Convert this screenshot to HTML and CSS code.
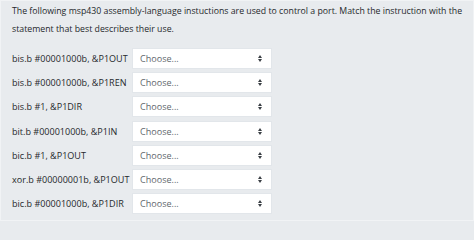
FILE: index.html
```html
<!DOCTYPE html>
<html>
<head>
<meta charset="utf-8">
<link rel="stylesheet" href="styles.css">
</head>
<body>
<div class="card">
  <p class="intro">The following msp430 assembly-language instuctions are used to control a port. Match the instruction with the<br>statement that best describes their use.</p>
  <div class="rows">
    <div class="row"><span class="label">bis.b #00001000b, &amp;P1OUT</span><div class="select"><span>Choose...</span><span class="caret"></span></div></div>
    <div class="row"><span class="label">bis.b #00001000b, &amp;P1REN</span><div class="select"><span>Choose...</span><span class="caret"></span></div></div>
    <div class="row"><span class="label">bis.b #1, &amp;P1DIR</span><div class="select"><span>Choose...</span><span class="caret"></span></div></div>
    <div class="row"><span class="label">bit.b #00001000b, &amp;P1IN</span><div class="select"><span>Choose...</span><span class="caret"></span></div></div>
    <div class="row"><span class="label">bic.b #1, &amp;P1OUT</span><div class="select"><span>Choose...</span><span class="caret"></span></div></div>
    <div class="row"><span class="label">xor.b #00000001b, &amp;P1OUT</span><div class="select"><span>Choose...</span><span class="caret"></span></div></div>
    <div class="row"><span class="label">bic.b #00001000b, &amp;P1DIR</span><div class="select"><span>Choose...</span><span class="caret"></span></div></div>
  </div>
</div>
</body>
</html>
```
FILE: styles.css
```css
html, body {
  margin: 0;
  padding: 0;
  background: #e8ebee;
}
body {
  font-family: "Open Sans", "Noto Sans", sans-serif;
  font-size: 9.05px;
  color: #26292c;
}
.card {
  box-sizing: border-box;
  width: 474px;
  height: 221px;
  border: 1px solid #f1f3f5;
  background: #e8ebee;
  padding: 2px 1px 0 11px;
  overflow: hidden;
}
.intro {
  margin: 0;
  font-size: 8.75px;
  line-height: 17.5px;
  white-space: nowrap;
}
.rows {
  margin-top: 10px;
  display: flex;
  flex-direction: column;
  gap: 3.2px;
}
.row {
  display: flex;
  align-items: center;
}
.label {
  width: 120px;
  white-space: nowrap;
}
.select {
  box-sizing: border-box;
  width: 140px;
  height: 21px;
  background: #fff;
  border: 1px solid #e2e6ea;
  display: flex;
  align-items: center;
  justify-content: space-between;
  padding: 0 8px 0 7px;
  color: #62686e;
}
.caret {
  width: 5px;
  height: 7px;
  position: relative;
}
.caret::before, .caret::after {
  content: "";
  position: absolute;
  left: 0;
  border-left: 2.5px solid transparent;
  border-right: 2.5px solid transparent;
}
.caret::before {
  top: 0;
  border-bottom: 3px solid #3a3f44;
}
.caret::after {
  bottom: 0;
  border-top: 3px solid #3a3f44;
}
```
